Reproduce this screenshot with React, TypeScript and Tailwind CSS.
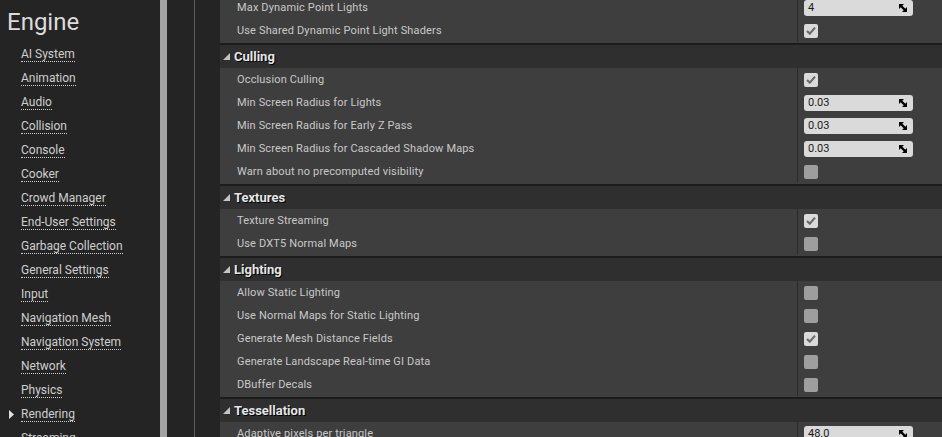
import React from 'react';

type Row = { label: string; kind: 'check' | 'number'; checked?: boolean; value?: string };
type Section = { title?: string; rows: Row[] };

const sections: Section[] = [
  {
    rows: [
      { label: 'Max Dynamic Point Lights', kind: 'number', value: '4' },
      { label: 'Use Shared Dynamic Point Light Shaders', kind: 'check', checked: true },
    ],
  },
  {
    title: 'Culling',
    rows: [
      { label: 'Occlusion Culling', kind: 'check', checked: true },
      { label: 'Min Screen Radius for Lights', kind: 'number', value: '0.03' },
      { label: 'Min Screen Radius for Early Z Pass', kind: 'number', value: '0.03' },
      { label: 'Min Screen Radius for Cascaded Shadow Maps', kind: 'number', value: '0.03' },
      { label: 'Warn about no precomputed visibility', kind: 'check', checked: false },
    ],
  },
  {
    title: 'Textures',
    rows: [
      { label: 'Texture Streaming', kind: 'check', checked: true },
      { label: 'Use DXT5 Normal Maps', kind: 'check', checked: false },
    ],
  },
  {
    title: 'Lighting',
    rows: [
      { label: 'Allow Static Lighting', kind: 'check', checked: false },
      { label: 'Use Normal Maps for Static Lighting', kind: 'check', checked: false },
      { label: 'Generate Mesh Distance Fields', kind: 'check', checked: true },
      { label: 'Generate Landscape Real-time GI Data', kind: 'check', checked: false },
      { label: 'DBuffer Decals', kind: 'check', checked: false },
    ],
  },
  {
    title: 'Tessellation',
    rows: [{ label: 'Adaptive pixels per triangle', kind: 'number', value: '48.0' }],
  },
];

const navItems = [
  'AI System',
  'Animation',
  'Audio',
  'Collision',
  'Console',
  'Cooker',
  'Crowd Manager',
  'End-User Settings',
  'Garbage Collection',
  'General Settings',
  'Input',
  'Navigation Mesh',
  'Navigation System',
  'Network',
  'Physics',
  'Rendering',
  'Streaming',
];

function Checkbox({ checked }: { checked?: boolean }) {
  return (
    <div
      className={`w-[14px] h-[14px] rounded-[2px] flex items-center justify-center ${
        checked ? 'bg-[#dadada]' : 'bg-[#9e9e9e]'
      }`}
    >
      {checked && (
        <svg width="10" height="9" viewBox="0 0 10 9">
          <path d="M1 5 L3.8 7.6 L9 1.6" fill="none" stroke="#6b6b6b" strokeWidth="2.2" />
        </svg>
      )}
    </div>
  );
}

function NumberBox({ value }: { value?: string }) {
  return (
    <div className="w-[109px] h-[16px] rounded-[3px] bg-[#dadada] flex items-center justify-between pl-[4px] pr-[6px]">
      <span className="text-[11px] leading-none text-[#1a1a1a]">{value}</span>
      {/* drag-to-scrub icon */}
      <svg width="8" height="8" viewBox="0 0 8 8">
        <path d="M0 0 H5 L0 5 Z" fill="#000" />
        <path d="M8 8 H3 L8 3 Z" fill="#000" />
        <path d="M1.5 1.5 L6.5 6.5" stroke="#000" strokeWidth="2.4" />
      </svg>
    </div>
  );
}

function SectionBlock({ section }: { section: Section }) {
  return (
    <div className="flex flex-col">
      {section.title && (
        <div className="h-[23px] bg-[#2f2f2f] flex items-center border-t-2 border-[#1c1c1c] box-content">
          <svg width="7" height="7" viewBox="0 0 7 7" className="ml-[3px] mr-[4px] -mt-[1px]">
            <path d="M7 0 V7 H0 Z" fill="#c4c4c4" />
          </svg>
          <span
            className="text-[13px] font-bold text-[#e6e6e6]"
            style={{ textShadow: '1px 1px 0 #000' }}
          >
            {section.title}
          </span>
        </div>
      )}
      <div className="bg-[#3e3e3e] pb-[1px]">
        {section.rows.map((r) => (
          <div key={r.label} className="h-[23px] flex items-stretch">
            <div className="w-[577px] flex items-center pl-[17px] pt-[1px] text-[11px] tracking-[0.15px] text-[#c9c9c9]">
              {r.label}
            </div>
            <div className="flex-1 flex items-center pl-[6px] border-l border-[#2b2b2b]">
              {r.kind === 'check' ? <Checkbox checked={r.checked} /> : <NumberBox value={r.value} />}
            </div>
          </div>
        ))}
      </div>
    </div>
  );
}

export default function App() {
  return (
    <div
      className="w-[942px] h-[437px] overflow-hidden flex bg-[#242424]"
      style={{ fontFamily: 'Roboto, "Noto Sans", sans-serif' }}
    >
      {/* Sidebar */}
      <div className="w-[160px] shrink-0 bg-[#242424] flex flex-col pl-[7px]">
        <div className="text-[24px] text-[#dcdcdc] leading-none mt-[10px] mb-[8px]">Engine</div>
        {navItems.map((item) => (
          <div key={item} className="h-[24px] flex items-center relative shrink-0">
            {item === 'Rendering' && (
              <svg width="5" height="9" viewBox="0 0 5 9" className="absolute left-[2px] top-[8px]">
                <path d="M0 0 L5 4.5 L0 9 Z" fill="#e0e0e0" />
              </svg>
            )}
            <span className="ml-[14px] text-[12px] text-[#cfcfcf] leading-[14px] border-b border-dotted border-[#d0d0d0]">
              {item}
            </span>
          </div>
        ))}
      </div>

      {/* Scrollbar */}
      <div className="w-[7px] shrink-0 bg-[#a3a3a3]" />

      {/* Gutter */}
      <div className="w-[28px] shrink-0 bg-[#242424] border-r border-[#5c5c5c]" />
      <div className="w-[25px] shrink-0 bg-[#242424]" />

      {/* Details panel */}
      <div className="flex-1 flex flex-col -mt-[4px] bg-[#3e3e3e]">
        {sections.map((s, i) => (
          <SectionBlock key={i} section={s} />
        ))}
      </div>
    </div>
  );
}
